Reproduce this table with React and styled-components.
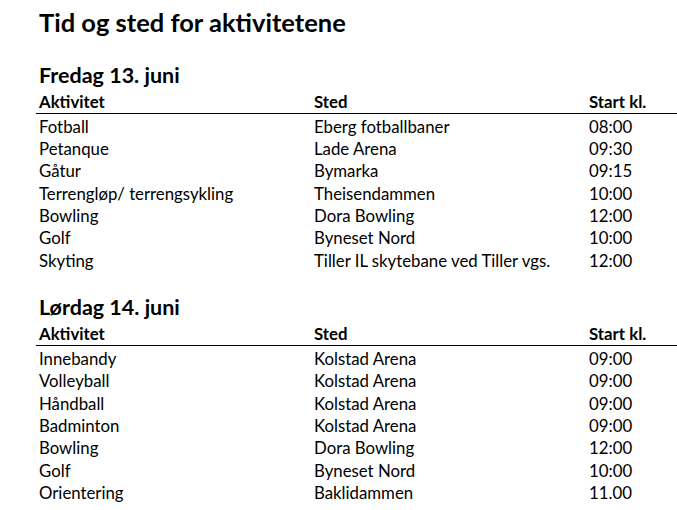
import React from "react";
import styled, { createGlobalStyle } from "styled-components";

const Global = createGlobalStyle`
  html, body { margin: 0; padding: 0; background: #fff; }
  body { font-family: Lato, "Open Sans", sans-serif; color: #000; overflow: hidden; }
`;

const Page = styled.div`
  width: 677px;
  height: 510px;
  padding: 6px 0 0 36px;
  box-sizing: border-box;
  overflow: hidden;
`;

const Title = styled.h1`
  margin: 0 0 0 3px;
  font-size: 25.5px;
  font-weight: 700;
  line-height: 32px;
`;

const Section = styled.section`
  margin-top: ${(p) => p.$top}px;
`;

const DayHeading = styled.h2`
  margin: 0 0 0 3px;
  font-size: 21.5px;
  font-weight: 700;
  line-height: 27px;
`;

const Table = styled.div`
  width: 641px;
`;

const Row = styled.div`
  display: grid;
  grid-template-columns: 275px 275px 91px;
  height: ${(p) => (p.$head ? 24 : 22.35)}px;
  align-items: center;
  font-size: 16.8px;
  font-weight: ${(p) => (p.$head ? 700 : 400)};
  border-bottom: ${(p) => (p.$head ? "1px solid #000" : "none")};
  margin-bottom: ${(p) => (p.$head ? 1 : 0)}px;
`;

const Cell = styled.div`
  padding-left: 3px;
  white-space: nowrap;
`;

const days = [
  {
    title: "Fredag 13. juni",
    top: 24,
    rows: [
      ["Fotball", "Eberg fotballbaner", "08:00"],
      ["Petanque", "Lade Arena", "09:30"],
      ["Gåtur", "Bymarka", "09:15"],
      ["Terrengløp/ terrengsykling", "Theisendammen", "10:00"],
      ["Bowling", "Dora Bowling", "12:00"],
      ["Golf", "Byneset Nord", "10:00"],
      ["Skyting", "Tiller IL skytebane ved Tiller vgs.", "12:00"],
    ],
  },
  {
    title: "Lørdag 14. juni",
    top: 23,
    rows: [
      ["Innebandy", "Kolstad Arena", "09:00"],
      ["Volleyball", "Kolstad Arena", "09:00"],
      ["Håndball", "Kolstad Arena", "09:00"],
      ["Badminton", "Kolstad Arena", "09:00"],
      ["Bowling", "Dora Bowling", "12:00"],
      ["Golf", "Byneset Nord", "10:00"],
      ["Orientering", "Baklidammen", "11.00"],
    ],
  },
];

export default function App() {
  return (
    <Page>
      <Global />
      <Title>Tid og sted for aktivitetene</Title>
      {days.map((d) => (
        <Section key={d.title} $top={d.top}>
          <DayHeading>{d.title}</DayHeading>
          <Table>
            <Row $head>
              <Cell>Aktivitet</Cell>
              <Cell>Sted</Cell>
              <Cell>Start kl.</Cell>
            </Row>
            {d.rows.map((r, i) => (
              <Row key={i}>
                {r.map((c, j) => (
                  <Cell key={j}>{c}</Cell>
                ))}
              </Row>
            ))}
          </Table>
        </Section>
      ))}
    </Page>
  );
}
